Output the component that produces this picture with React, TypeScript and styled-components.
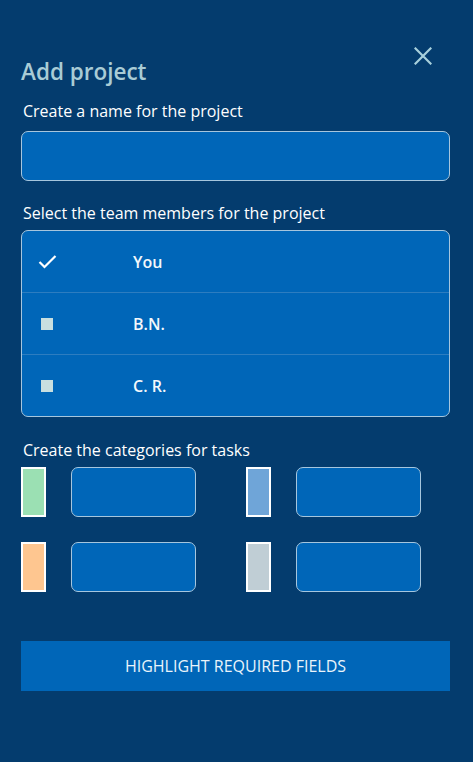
import React from "react";
import styled, { createGlobalStyle } from "styled-components";

const Global = createGlobalStyle`
  html, body { margin: 0; padding: 0; background: #043c6e; }
  body { font-family: "Open Sans", "Noto Sans", sans-serif; }
  * { box-sizing: border-box; }
`;

const Page = styled.div`
  width: 473px;
  height: 762px;
  background: #043c6e;
  padding: 46px 23px 0 21px;
  display: flex;
  flex-direction: column;
`;

const Header = styled.div`
  display: flex;
  justify-content: space-between;
  align-items: flex-start;
  height: 53px;
`;

const Title = styled.h1`
  margin: 12px 0 0 0;
  font-size: 22.5px;
  line-height: 28px;
  font-weight: 600;
  color: #a9ccd6;
`;

const Close = styled.button`
  background: none;
  border: none;
  padding: 0;
  margin: 0 17px 0 0;
  width: 20px;
  height: 20px;
  display: flex;
  align-items: center;
  justify-content: center;
  cursor: pointer;
`;

const Label = styled.div<{ $top?: number }>`
  margin: ${(p) => p.$top ?? 0}px 0 0 2px;
  font-size: 16px;
  line-height: 20px;
  color: #ffffff;
`;

const Field = styled.div<{ $w?: number; $top?: number }>`
  width: ${(p) => (p.$w ? `${p.$w}px` : "100%")};
  margin-top: ${(p) => p.$top ?? 0}px;
  height: 50px;
  background: #0066b8;
  border: 1px solid #a6c6de;
  border-radius: 7px;
`;

const List = styled.div`
  margin-top: 7px;
  border: 1px solid #a6c6de;
  border-radius: 7px;
  background: #0066b8;
  overflow: hidden;
`;

const Row = styled.div<{ $first?: boolean }>`
  height: ${(p) => (p.$first ? 61 : 62)}px;
  display: flex;
  align-items: center;
  border-top: ${(p) => (p.$first ? "none" : "1px solid #2d7dc0")};
  color: #f4f8fb;
  font-size: 16px;
  font-weight: 600;
`;

const Mark = styled.div`
  width: 111px;
  padding-left: 16px;
  display: flex;
  align-items: center;
`;

const Square = styled.div`
  width: 12px;
  height: 12px;
  margin-left: 3px;
  background: #c8dfe0;
`;

const Grid = styled.div`
  margin-top: 7px;
  display: grid;
  grid-template-columns: repeat(2, 175px);
  column-gap: 50px;
  row-gap: 25px;
`;

const Cat = styled.div`
  display: flex;
  align-items: center;
  gap: 25px;
`;

const Swatch = styled.div<{ $c: string }>`
  width: 25px;
  height: 50px;
  background: ${(p) => p.$c};
  border: 2px solid #ffffff;
`;

const Button = styled.button`
  margin-top: 49px;
  width: 100%;
  height: 50px;
  background: #0066b8;
  border: none;
  color: #eaf4fb;
  font-family: "Open Sans", sans-serif;
  font-size: 16px;
  text-transform: uppercase;
  cursor: pointer;
`;

const members = [
  { name: "You", checked: true },
  { name: "B.N.", checked: false },
  { name: "C. R.", checked: false },
];

const colors = ["#9be0b3", "#6fa5d8", "#fec690", "#c0ced5"];

export default function App() {
  return (
    <>
      <Global />
      <Page>
        <Header>
          <Title>Add project</Title>
          <Close aria-label="close">
            <svg width="18" height="18" viewBox="0 0 18 18">
              <path d="M1.5 1.5 L16.5 16.5 M16.5 1.5 L1.5 16.5" stroke="#a8d0dc" strokeWidth="2.2" strokeLinecap="square" />
            </svg>
          </Close>
        </Header>
        <Label $top={2}>Create a name for the project</Label>
        <Field $top={10} />
        <Label $top={22}>Select the team members for the project</Label>
        <List>
          {members.map((m, i) => (
            <Row key={m.name} $first={i === 0}>
              <Mark>
                {m.checked ? (
                  <svg width="19" height="15" viewBox="0 0 19 15">
                    <path d="M1.5 8 L6.5 13 L17.5 2" stroke="#ffffff" strokeWidth="2.2" fill="none" />
                  </svg>
                ) : (
                  <Square />
                )}
              </Mark>
              <span>{m.name}</span>
            </Row>
          ))}
        </List>
        <Label $top={23}>Create the categories for tasks</Label>
        <Grid>
          {colors.map((c) => (
            <Cat key={c}>
              <Swatch $c={c} />
              <Field $w={125} />
            </Cat>
          ))}
        </Grid>
        <Button>Highlight required fields</Button>
      </Page>
    </>
  );
}
